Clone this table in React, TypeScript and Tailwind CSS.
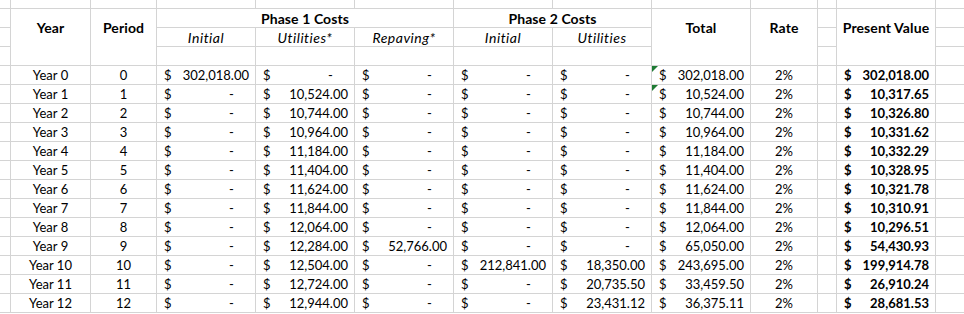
import React from "react";

const B = "border-[#d4d4d4]";
const cellBase = `border-r border-b ${B}`;

type Row = {
  y: number;
  p1i: string;
  p1u: string;
  p1r: string;
  p2i: string;
  p2u: string;
  total: string;
  pv: string;
  flag?: boolean;
};

const rows: Row[] = [
  { y: 0, p1i: "302,018.00", p1u: "-", p1r: "-", p2i: "-", p2u: "-", total: "302,018.00", pv: "302,018.00", flag: true },
  { y: 1, p1i: "-", p1u: "10,524.00", p1r: "-", p2i: "-", p2u: "-", total: "10,524.00", pv: "10,317.65", flag: true },
  { y: 2, p1i: "-", p1u: "10,744.00", p1r: "-", p2i: "-", p2u: "-", total: "10,744.00", pv: "10,326.80" },
  { y: 3, p1i: "-", p1u: "10,964.00", p1r: "-", p2i: "-", p2u: "-", total: "10,964.00", pv: "10,331.62" },
  { y: 4, p1i: "-", p1u: "11,184.00", p1r: "-", p2i: "-", p2u: "-", total: "11,184.00", pv: "10,332.29" },
  { y: 5, p1i: "-", p1u: "11,404.00", p1r: "-", p2i: "-", p2u: "-", total: "11,404.00", pv: "10,328.95" },
  { y: 6, p1i: "-", p1u: "11,624.00", p1r: "-", p2i: "-", p2u: "-", total: "11,624.00", pv: "10,321.78" },
  { y: 7, p1i: "-", p1u: "11,844.00", p1r: "-", p2i: "-", p2u: "-", total: "11,844.00", pv: "10,310.91" },
  { y: 8, p1i: "-", p1u: "12,064.00", p1r: "-", p2i: "-", p2u: "-", total: "12,064.00", pv: "10,296.51" },
  { y: 9, p1i: "-", p1u: "12,284.00", p1r: "52,766.00", p2i: "-", p2u: "-", total: "65,050.00", pv: "54,430.93" },
  { y: 10, p1i: "-", p1u: "12,504.00", p1r: "-", p2i: "212,841.00", p2u: "18,350.00", total: "243,695.00", pv: "199,914.78" },
  { y: 11, p1i: "-", p1u: "12,724.00", p1r: "-", p2i: "-", p2u: "20,735.50", total: "33,459.50", pv: "26,910.24" },
  { y: 12, p1i: "-", p1u: "12,944.00", p1r: "-", p2i: "-", p2u: "23,431.12", total: "36,375.11", pv: "28,681.53" },
];

function Money({ v, bold, flag }: { v: string; bold?: boolean; flag?: boolean }) {
  return (
    <div className={`${cellBase} relative flex items-end justify-between pl-[7px] pr-[6px] pb-[1px] ${bold ? "font-bold" : ""}`}>
      {flag && (
        <span className="absolute left-0 top-0 w-0 h-0 border-t-[6px] border-r-[6px] border-t-[#1e7b34] border-r-transparent" />
      )}
      <span>$</span>
      {v === "-" ? (
        <span>
          -<span className="invisible">00</span>
        </span>
      ) : (
        <span>{v}</span>
      )}
    </div>
  );
}

function Empty({ last }: { last?: boolean }) {
  return <div className={last ? `border-b ${B}` : cellBase} />;
}

function TallHead({ label }: { label: string }) {
  return (
    <div className={`${cellBase} row-span-3 font-bold text-[14px] tracking-[0.1px]`}>
      <div className="h-[36px] flex items-center justify-center">{label}</div>
    </div>
  );
}

const boldHead = `${cellBase} flex items-center justify-center font-bold text-[14px] tracking-[0.1px]`;
const italHead = `${cellBase} flex items-center justify-center italic text-[14px] tracking-[0.5px] pt-[1px]`;

export default function App() {
  return (
    <div
      className="w-[964px] h-[314px] overflow-hidden bg-white text-black text-[13px] leading-[15px]"
      style={{ fontFamily: "Lato, 'Open Sans', sans-serif" }}
    >
      <div className="grid grid-cols-[11px_80px_66px_99px_99px_99px_99px_99px_99px_67px_19px_99px_28px] grid-rows-[9px_repeat(16,19px)]">
        {/* top partial row */}
        {Array.from({ length: 13 }).map((_, i) => (
          <Empty key={`t${i}`} last={i === 12} />
        ))}

        {/* header row 1 */}
        <Empty />
        <TallHead label="Year" />
        <TallHead label="Period" />
        <div className={`${boldHead} col-span-3 pt-[1px]`}>Phase 1 Costs</div>
        <div className={`${boldHead} col-span-2 pt-[1px]`}>Phase 2 Costs</div>
        <TallHead label="Total" />
        <TallHead label="Rate" />
        <Empty />
        <TallHead label="Present Value" />
        <Empty last />

        {/* header row 2 */}
        <Empty />
        <div className={italHead}>Initial</div>
        <div className={italHead}>Utilities*</div>
        <div className={italHead}>Repaving*</div>
        <div className={italHead}>Initial</div>
        <div className={italHead}>Utilities</div>
        <Empty />
        <Empty last />

        {/* blank row */}
        <Empty />
        <Empty />
        <Empty />
        <Empty />
        <Empty />
        <Empty />
        <Empty />
        <Empty last />

        {rows.map((r) => (
          <React.Fragment key={r.y}>
            <Empty />
            <div className={`${cellBase} flex items-end justify-center pb-[1px]`}>Year {r.y}</div>
            <div className={`${cellBase} flex items-end justify-center pb-[1px]`}>{r.y}</div>
            <Money v={r.p1i} />
            <Money v={r.p1u} />
            <Money v={r.p1r} />
            <Money v={r.p2i} />
            <Money v={r.p2u} />
            <Money v={r.total} flag={r.flag} />
            <div className={`${cellBase} flex items-end justify-center pb-[1px]`}>2%</div>
            <Empty />
            <Money v={r.pv} bold />
            <Empty last />
          </React.Fragment>
        ))}
      </div>
    </div>
  );
}
